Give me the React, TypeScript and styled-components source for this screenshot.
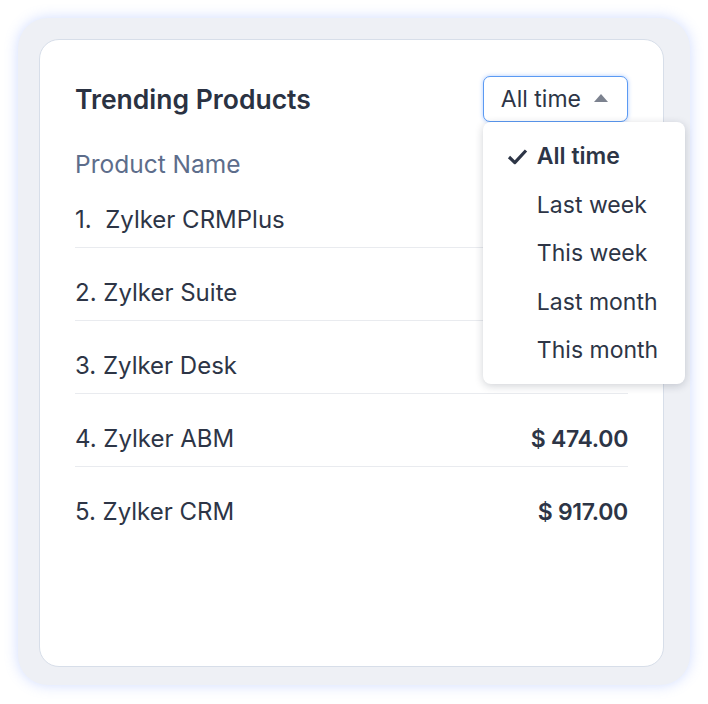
import styled, { createGlobalStyle } from 'styled-components';

const GlobalStyle = createGlobalStyle`
  html, body {
    margin: 0;
    padding: 0;
    background: #ffffff;
    font-family: Inter, 'Noto Sans', sans-serif;
  }
`;

const Page = styled.div`
  padding: 18px;
`;

const Frame = styled.div`
  width: 672px;
  height: 667px;
  box-sizing: border-box;
  padding: 21px 26px 18px 21px;
  background: #eef0f5;
  border-radius: 30px;
  box-shadow: 0 0 14px rgba(110, 145, 255, 0.32);
`;

const Card = styled.div`
  height: 100%;
  box-sizing: border-box;
  padding: 36px 35px;
  background: #ffffff;
  border: 1px solid #d7dee9;
  border-radius: 20px;
`;

const Header = styled.div`
  display: flex;
  align-items: center;
  justify-content: space-between;
`;

const Title = styled.h2`
  margin: 0;
  font-size: 26.5px;
  font-weight: 600;
  color: #2a3242;
`;

const SelectWrap = styled.div`
  position: relative;
`;

const SelectButton = styled.button`
  display: flex;
  align-items: center;
  gap: 13px;
  height: 46px;
  box-sizing: border-box;
  padding: 0 19px 0 17px;
  background: #ffffff;
  border: 1px solid #5b9af3;
  border-radius: 7px;
  box-shadow: 0 0 4px rgba(70, 140, 255, 0.45);
  font-family: inherit;
  font-size: 23px;
  color: #2d3546;
  cursor: pointer;
`;

const Caret = styled.span`
  width: 0;
  height: 0;
  border-left: 7.5px solid transparent;
  border-right: 7.5px solid transparent;
  border-bottom: 8px solid #7c828f;
  margin-top: -2px;
`;

const Menu = styled.ul`
  position: absolute;
  top: 46px;
  left: 0;
  width: 202px;
  box-sizing: border-box;
  margin: 0;
  padding: 10px 0 9px;
  list-style: none;
  background: #ffffff;
  border-radius: 8px;
  box-shadow: 0 2px 9px rgba(20, 30, 50, 0.2);
  z-index: 2;
`;

const MenuItem = styled.li<{ $active?: boolean }>`
  position: relative;
  padding: 10px 0 10.5px 54px;
  line-height: 28px;
  font-size: 23px;
  font-weight: ${({ $active }) => ($active ? 600 : 400)};
  color: #2d3546;
`;

const Check = styled.svg`
  position: absolute;
  left: 24px;
  top: 16px;
`;

const ColumnHeader = styled.div`
  margin-top: 31px;
  line-height: 22px;
  font-size: 24.5px;
  color: #5d6d8b;
`;

const Row = styled.div<{ $last?: boolean }>`
  display: flex;
  justify-content: space-between;
  padding: 31px 0 13px;
  line-height: 28px;
  font-size: 24px;
  color: #2d3546;
  border-bottom: ${({ $last }) => ($last ? 'none' : '1px solid #e9ebef')};
`;

const ProductName = styled.span`
  white-space: pre;
`;

const Amount = styled.span`
  font-weight: 600;
  font-size: 23px;
  letter-spacing: -0.3px;
`;

const products = [
  { name: '1.  Zylker CRMPlus', amount: '' },
  { name: '2. Zylker Suite', amount: '' },
  { name: '3. Zylker Desk', amount: '' },
  { name: '4. Zylker ABM', amount: '$ 474.00' },
  { name: '5. Zylker CRM', amount: '$ 917.00' },
];

const periods = ['All time', 'Last week', 'This week', 'Last month', 'This month'];

export default function App() {
  return (
    <Page>
      <GlobalStyle />
      <Frame>
        <Card>
          <Header>
            <Title>Trending Products</Title>
            <SelectWrap>
              <SelectButton>
                All time
                <Caret />
              </SelectButton>
              <Menu>
                {periods.map((p, i) => (
                  <MenuItem key={p} $active={i === 0}>
                    {i === 0 && (
                      <Check width="21" height="17" viewBox="0 0 21 17">
                        <path d="M2 9 L7.8 14.6 L19 2.5" fill="none" stroke="#2d3546" strokeWidth="3.2" strokeLinejoin="round" />
                      </Check>
                    )}
                    {p}
                  </MenuItem>
                ))}
              </Menu>
            </SelectWrap>
          </Header>
          <ColumnHeader>Product Name</ColumnHeader>
          {products.map((p, i) => (
            <Row key={p.name} $last={i === products.length - 1}>
              <ProductName>{p.name}</ProductName>
              <Amount>{p.amount}</Amount>
            </Row>
          ))}
        </Card>
      </Frame>
    </Page>
  );
}
